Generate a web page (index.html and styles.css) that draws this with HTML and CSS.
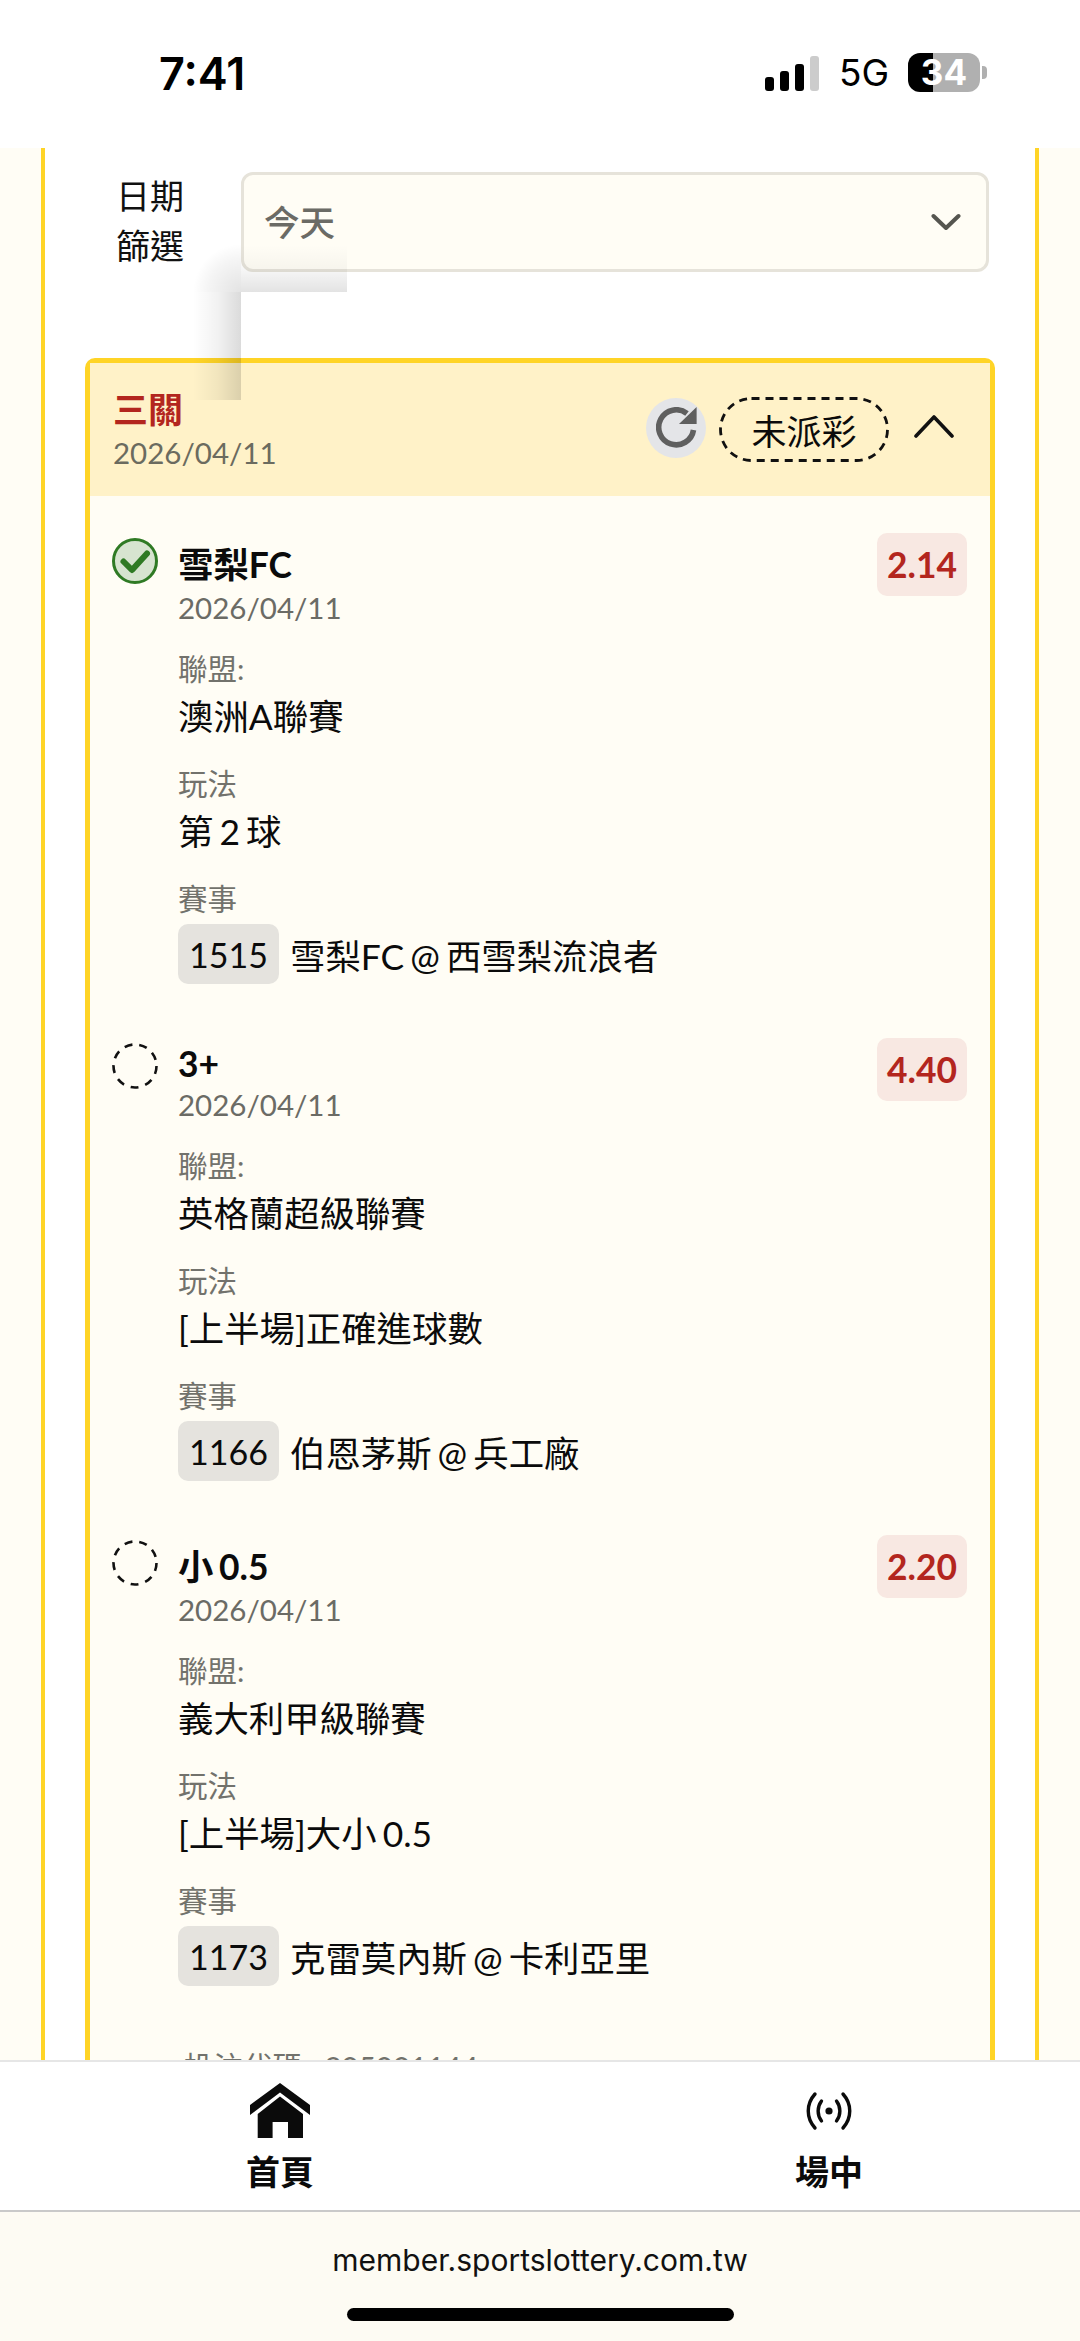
FILE: index.html
```html
<!DOCTYPE html>
<html lang="zh-Hant">

<head>
    <meta charset="UTF-8">
    <meta name="viewport" content="width=device-width, initial-scale=1.0">
    <title>注單</title>
    <link rel="stylesheet" href="styles.css">
</head>

<body>
    <div class="phone">
        <!-- Status bar -->
        <div class="status-bar">
            <span class="clock">7:41</span>
            <div class="status-right">
                <div class="signal">
                    <i class="bar bar-1"></i>
                    <i class="bar bar-2"></i>
                    <i class="bar bar-3"></i>
                    <i class="bar bar-4"></i>
                </div>
                <span class="network">5G</span>
                <div class="battery">
                    <span class="battery-level">34</span>
                    <i class="battery-tip"></i>
                </div>
            </div>
        </div>

        <!-- Scrolled page -->
        <div class="page">
            <div class="panel">
                <div class="filter-row">
                    <label class="filter-label">日期<br>篩選</label>
                    <div class="select-box">
                        <span class="select-value">今天</span>
                        <svg class="select-arrow" viewBox="0 0 30 18" width="30" height="18">
                            <path d="M2.5 3 L15 15 L27.5 3" fill="none" stroke="#55554f" stroke-width="4" stroke-linecap="round" stroke-linejoin="round" />
                        </svg>
                    </div>
                </div>

                <div class="card">
                    <div class="card-header">
                        <div class="card-title">
                            <div class="bet-type">三關</div>
                            <div class="bet-date">2026/04/11</div>
                        </div>
                        <div class="card-actions">
                            <div class="refresh">
                                <svg viewBox="0 0 41 41" width="41" height="41">
                                    <path d="M37.5 23 A17.5 17.5 0 1 1 31 6.5" fill="none" stroke="#5f5f5f" stroke-width="5.6" />
                                    <path d="M40.6 0 V17 H23 Z" fill="#5f5f5f" />
                                </svg>
                            </div>
                            <div class="status-pill">
                                <svg class="pill-outline" viewBox="0 0 170 65" width="170" height="65">
                                    <rect x="1.5" y="1.5" width="167" height="62" rx="31" fill="none" stroke="#111" stroke-width="2.8" stroke-dasharray="8 6" />
                                </svg>
                                未派彩
                            </div>
                            <svg class="collapse" viewBox="0 0 40 24" width="40" height="24">
                                <path d="M2 22 L20 3 L38 22" fill="none" stroke="#111" stroke-width="3.6" stroke-linecap="round" stroke-linejoin="round" />
                            </svg>
                        </div>
                    </div>

                    <div class="card-body">
                        <div class="leg">
                            <svg class="leg-icon" viewBox="0 0 46 46" width="46" height="46">
                                <circle cx="23" cy="23" r="21.5" fill="#d7e4d0" stroke="#2f7a24" stroke-width="3" />
                                <path d="M11.5 23.5 L20 32 L35 15.5" fill="none" stroke="#2f7a24" stroke-width="6" stroke-linecap="round" stroke-linejoin="round" />
                            </svg>
                            <div class="leg-main">
                                <div class="leg-name">雪梨FC</div>
                                <div class="leg-date">2026/04/11</div>
                                <div class="field-label">聯盟:</div>
                                <div class="field-value">澳洲A聯賽</div>
                                <div class="field-label">玩法</div>
                                <div class="field-value">第 2 球</div>
                                <div class="field-label">賽事</div>
                                <div class="match"><span class="match-no">1515</span>雪梨FC @ 西雪梨流浪者</div>
                            </div>
                            <div class="odds">2.14</div>
                        </div>

                        <div class="leg">
                            <svg class="leg-icon" viewBox="0 0 46 46" width="46" height="46">
                                <circle cx="23" cy="23" r="21.5" fill="none" stroke="#111" stroke-width="2.6" stroke-dasharray="8 7" />
                            </svg>
                            <div class="leg-main">
                                <div class="leg-name">3+</div>
                                <div class="leg-date">2026/04/11</div>
                                <div class="field-label">聯盟:</div>
                                <div class="field-value">英格蘭超級聯賽</div>
                                <div class="field-label">玩法</div>
                                <div class="field-value">[上半場]正確進球數</div>
                                <div class="field-label">賽事</div>
                                <div class="match"><span class="match-no">1166</span>伯恩茅斯 @ 兵工廠</div>
                            </div>
                            <div class="odds">4.40</div>
                        </div>

                        <div class="leg">
                            <svg class="leg-icon" viewBox="0 0 46 46" width="46" height="46">
                                <circle cx="23" cy="23" r="21.5" fill="none" stroke="#111" stroke-width="2.6" stroke-dasharray="8 7" />
                            </svg>
                            <div class="leg-main">
                                <div class="leg-name">小 0.5</div>
                                <div class="leg-date">2026/04/11</div>
                                <div class="field-label">聯盟:</div>
                                <div class="field-value">義大利甲級聯賽</div>
                                <div class="field-label">玩法</div>
                                <div class="field-value">[上半場]大小 0.5</div>
                                <div class="field-label">賽事</div>
                                <div class="match"><span class="match-no">1173</span>克雷莫內斯 @ 卡利亞里</div>
                            </div>
                            <div class="odds">2.20</div>
                        </div>

                        <div class="bet-code">投注代碼 : 205001144</div>
                    </div>
                </div>
            </div>

            <!-- Stray shadow left on the capture -->
            <div class="stray-shadow">
                <i class="shadow-corner"></i>
                <i class="shadow-top"></i>
                <i class="shadow-left"></i>
            </div>
        </div>

        <!-- Bottom nav -->
        <div class="bottom-nav">
            <div class="nav-item">
                <svg viewBox="0 0 60 56" width="60" height="56">
                    <path d="M30 0 L60 22 V32 L30 9.5 L0 32 V22 Z" fill="#0b0b0b" />
                    <path d="M30 13.5 L53 31 V55 H38 V39 H22.6 V55 H7.7 V31 Z" fill="#0b0b0b" />
                </svg>
                <span>首頁</span>
            </div>
            <div class="nav-item">
                <svg viewBox="0 0 46 38" width="46" height="38">
                    <circle cx="23" cy="19" r="3.6" fill="#0b0b0b" />
                    <path d="M15.5 9 C11 15 11 23 15.5 29 M30.5 9 C35 15 35 23 30.5 29" fill="none" stroke="#0b0b0b" stroke-width="3.4" stroke-linecap="round" />
                    <path d="M9 2 C0 12 0 26 9 36 M37 2 C46 12 46 26 37 36" fill="none" stroke="#0b0b0b" stroke-width="3.4" stroke-linecap="round" />
                </svg>
                <span>場中</span>
            </div>
        </div>

        <!-- Browser address bar -->
        <div class="browser-bar">
            <div class="url">member.sportslottery.com.tw</div>
            <div class="home-bar"></div>
        </div>
    </div>
</body>

</html>
```

FILE: styles.css
```css
* {
    box-sizing: border-box;
}

body {
    margin: 0;
    font-family: Lato, "Noto Sans CJK TC", sans-serif;
    color: #0b0b0b;
    background: #fff;
}

.phone {
    display: flex;
    flex-direction: column;
    width: 1080px;
    height: 2341px;
    overflow: hidden;
}

/* Status bar */
.status-bar {
    flex: 0 0 148px;
    display: flex;
    justify-content: space-between;
    padding: 47px 100px 0 159px;
    background: #fff;
}

.clock {
    font-family: Inter, sans-serif;
    font-size: 45px;
    font-weight: 600;
    line-height: 54px;
    color: #000;
}

.status-right {
    display: flex;
    align-items: flex-start;
    padding-top: 6px;
}

.signal {
    display: flex;
    align-items: flex-end;
    gap: 6px;
    height: 36px;
    margin-top: 2px;
}

.bar {
    width: 9px;
    border-radius: 3px;
    background: #000;
}

.bar-1 {
    height: 14px;
}

.bar-2 {
    height: 20px;
}

.bar-3 {
    height: 27px;
}

.bar-4 {
    height: 35px;
    background: #ccc;
}

.network {
    margin-left: 20px;
    font-family: Inter, sans-serif;
    font-size: 37px;
    line-height: 40px;
    color: #000;
}

.battery {
    position: relative;
    width: 72px;
    height: 39px;
    margin-left: 19px;
    border-radius: 12px;
    background: linear-gradient(to right, #000 25px, #b0b0b0 25px);
    text-align: center;
}

.battery-level {
    font-family: Inter, sans-serif;
    font-size: 35px;
    font-weight: 700;
    line-height: 39px;
    color: #fff;
}

.battery-tip {
    position: absolute;
    top: 13px;
    right: -7px;
    width: 5px;
    height: 13px;
    border-radius: 0 4px 4px 0;
    background: #b0b0b0;
}

/* Page */
.page {
    position: relative;
    flex: 0 0 1912px;
    overflow: hidden;
    padding: 0 41px;
    background: #fffdf5;
}

.panel {
    height: 100%;
    padding: 24px 40px 0;
    border-left: 4px solid #ffd426;
    border-right: 4px solid #ffd426;
    background: #fff;
}

.filter-row {
    display: flex;
    align-items: center;
    padding: 0 6px 0 31px;
}

.filter-label {
    width: 68px;
    margin: -2px 57px 0 0;
    font-size: 34px;
    line-height: 50px;
    text-align: center;
    color: #111;
}

.select-box {
    flex: 1;
    display: flex;
    justify-content: space-between;
    align-items: center;
    height: 100px;
    padding: 0 25px 0 20px;
    border: 3px solid #e6e3da;
    border-radius: 12px;
    background: #fffdf5;
    font-size: 35.5px;
    font-weight: 500;
    color: #6b6b65;
}

.select-value {
    margin-bottom: 3px;
}

.card {
    margin-top: 86px;
    border: 5px solid #ffd426;
    border-radius: 10px;
    background: #fffdf5;
}

.card-header {
    display: flex;
    justify-content: space-between;
    height: 133px;
    padding: 0 36px 0 23px;
    background: #fff2c8;
}

.card-title {
    padding-top: 22px;
}

.bet-type {
    font-size: 35px;
    font-weight: 700;
    line-height: 48px;
    color: #b3261e;
}

.bet-date {
    font-size: 29.5px;
    line-height: 40px;
    color: #6b6b5f;
}

.card-actions {
    display: flex;
    align-items: center;
    padding-bottom: 4px;
}

.refresh {
    display: flex;
    justify-content: center;
    align-items: center;
    width: 60px;
    height: 60px;
    border-radius: 50%;
    background: #e4e5e8;
}

.status-pill {
    position: relative;
    display: flex;
    justify-content: center;
    align-items: center;
    width: 170px;
    height: 65px;
    margin: 4px 0 0 13px;
    font-size: 35px;
}

.pill-outline {
    position: absolute;
    top: 0;
    left: 0;
}

.collapse {
    margin: 0 0 3px 25px;
}

.card-body {
    padding: 37px 23px 0 22px;
}

.leg {
    display: flex;
    align-items: flex-start;
    margin-bottom: 54px;
}

.leg-icon {
    flex: none;
    margin: 5px 20px 0 0;
}

.leg-main {
    flex: 1;
    padding-top: 4px;
}

.leg-name {
    font-size: 35.4px;
    font-weight: 700;
    word-spacing: -3px;
}

.leg-date {
    font-size: 29.5px;
    line-height: 40px;
    color: #6b6b65;
}

.field-label {
    margin-top: 21px;
    font-size: 29.5px;
    line-height: 40px;
    color: #72726c;
}

.field-value {
    margin-top: 3px;
    padding-bottom: 2px;
    font-size: 35.4px;
    line-height: 49px;
    word-spacing: -3px;
}

.match {
    display: flex;
    align-items: center;
    margin-top: 5px;
    font-size: 35.4px;
    word-spacing: -3px;
}

.match-no {
    display: flex;
    justify-content: center;
    align-items: center;
    width: 101px;
    height: 60px;
    margin-right: 11px;
    border-radius: 10px;
    background: #e5e3de;
    font-size: 34px;
}

.odds {
    display: flex;
    justify-content: center;
    align-items: center;
    width: 90px;
    height: 63px;
    border-radius: 10px;
    background: #f8e8e2;
    font-size: 35.4px;
    font-weight: 700;
    color: #b3261e;
}

.bet-code {
    padding: 4px 0 0 72px;
    font-size: 29.5px;
    color: #72726c;
}

/* Stray shadow */
.stray-shadow {
    position: absolute;
    top: 97px;
    left: 193px;
    width: 154px;
    height: 155px;
    pointer-events: none;
}

.stray-shadow i {
    position: absolute;
    display: block;
}

.shadow-corner {
    top: 0;
    left: 0;
    width: 48px;
    height: 47px;
    background: radial-gradient(circle at bottom right, rgba(0, 0, 0, 0.11), rgba(0, 0, 0, 0.04) 50%, rgba(0, 0, 0, 0) 48px);
}

.shadow-top {
    top: 0;
    left: 48px;
    width: 106px;
    height: 47px;
    background: linear-gradient(to bottom, rgba(0, 0, 0, 0), rgba(0, 0, 0, 0.03) 50%, rgba(0, 0, 0, 0.11));
}

.shadow-left {
    top: 47px;
    left: 0;
    width: 48px;
    height: 108px;
    background: linear-gradient(to right, rgba(0, 0, 0, 0), rgba(0, 0, 0, 0.05) 50%, rgba(0, 0, 0, 0.14));
}

/* Bottom nav */
.bottom-nav {
    flex: 0 0 152px;
    display: flex;
    justify-content: space-between;
    padding: 21px 211px 0 240px;
    border-top: 2px solid #e6e6e6;
    border-bottom: 2px solid #c9c9c9;
    background: #fff;
}

.nav-item {
    display: flex;
    flex-direction: column;
    align-items: center;
    width: 80px;
    height: 116px;
    font-size: 34px;
    font-weight: 700;
    line-height: 48px;
}

.nav-item svg {
    flex: none;
    height: 56px;
}

.nav-item span {
    margin-top: 9px;
}

/* Address bar */
.browser-bar {
    flex: 0 0 129px;
    display: flex;
    flex-direction: column;
    align-items: center;
    padding-top: 28px;
    background: #fdfbf3;
}

.url {
    font-family: Inter, sans-serif;
    font-size: 30px;
    line-height: 40px;
    color: #111;
}

.home-bar {
    width: 387px;
    height: 13px;
    margin-top: 28px;
    border-radius: 7px;
    background: #000;
}
```
